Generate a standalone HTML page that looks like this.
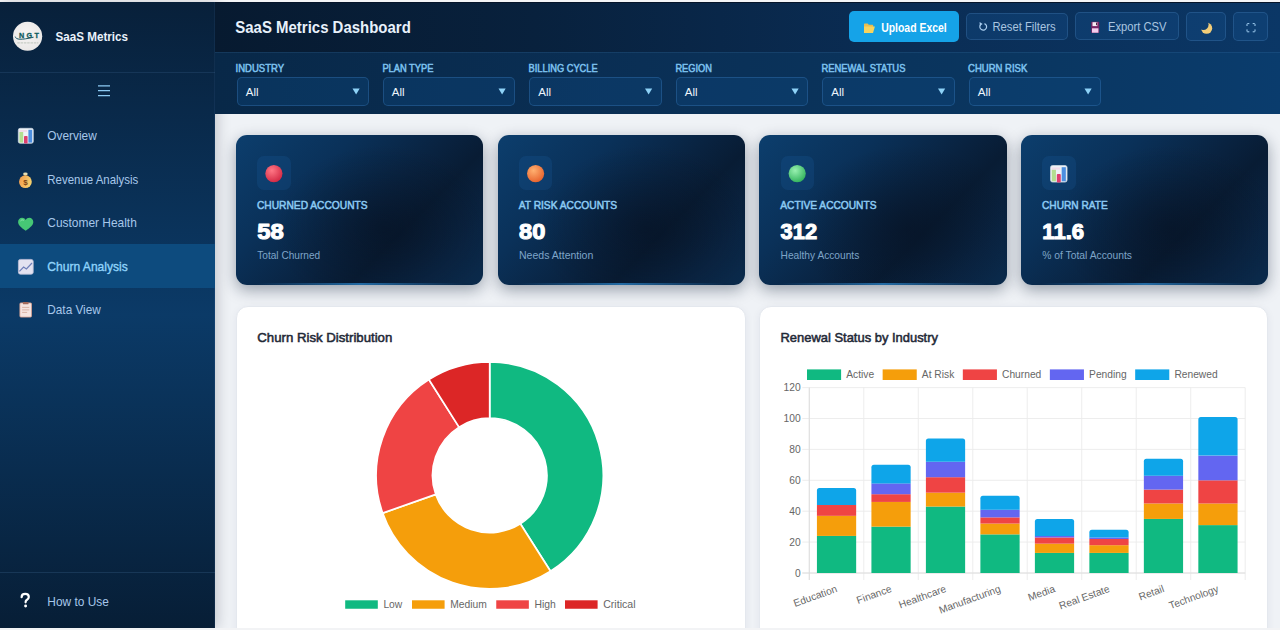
<!DOCTYPE html>
<html><head><meta charset="utf-8"><style>
*{margin:0;padding:0;box-sizing:border-box}
html,body{width:1280px;height:630px;overflow:hidden;background:#f4f5f7;font-family:"Liberation Sans", sans-serif}
.a{position:absolute}
#main{position:absolute;left:215px;top:113.5px;width:1065px;height:516.5px;background:#eff2f6}
#side{position:absolute;left:0;top:2px;width:215px;height:626px;box-shadow:3px 0 12px rgba(0,10,30,0.18);background:linear-gradient(180deg,#08203a 0%,#0b3a67 50%,#071e36 100%);border-right:1px solid rgba(120,170,230,0.08)}
#hdr{position:absolute;left:215px;top:2px;width:1065px;height:50px;background:linear-gradient(90deg,#071a30 0%,#08213d 30%,#0a2c53 62%,#0b3766 100%);border-top:1px solid #06152a}
#flt{position:absolute;left:215px;top:52px;width:1065px;height:61.5px;background:linear-gradient(90deg,#082848 0%,#0a2f55 40%,#0a3660 75%,#0a3c6d 100%);border-top:1px solid rgba(110,170,230,0.12)}
.sel{position:absolute;top:77px;width:132.5px;height:29px;border-radius:5px;background:rgba(14,70,125,0.38);border:1px solid rgba(70,140,210,0.30)}
.btn{position:absolute;border-radius:5px;background:rgba(20,80,140,0.35);border:1px solid rgba(110,170,230,0.2)}
.kpi{position:absolute;top:134.7px;width:247.4px;height:150px;border-radius:11px;background:radial-gradient(ellipse 45% 55% at 60% 62%,rgba(6,16,32,0.55) 0%,rgba(6,16,32,0.2) 60%,rgba(6,16,32,0) 100%),linear-gradient(135deg,#0c3e6d 0%,#0a3159 30%,#09223f 55%,#081c34 66%,#0a2544 85%,#0a2a4b 100%);box-shadow:0 5px 15px rgba(10,25,50,0.38);overflow:hidden}
.kpi:after{content:"";position:absolute;left:8%;right:8%;bottom:0;height:2px;background:linear-gradient(90deg,rgba(40,140,220,0),rgba(50,150,225,0.65),rgba(40,140,220,0))}
.kico{position:absolute;left:21.3px;top:21px;width:33.5px;height:34px;border-radius:7px;background:rgba(30,100,170,0.20)}
.card{position:absolute;top:305.7px;height:340px;background:#ffffff;border-radius:12px;border:1px solid #e4e8ee;box-shadow:0 2px 8px rgba(20,40,80,0.06)}
</style></head><body>
<div id="main"></div>
<div id="side"></div>
<div class="a" style="left:0;top:71.6px;width:215px;height:1px;background:rgba(120,175,230,0.12)"></div>
<div class="a" style="left:0;top:243.8px;width:215px;height:44.4px;background:#0d4b7e"></div>
<div class="a" style="left:0;top:572px;width:215px;height:1px;background:rgba(120,175,230,0.15)"></div>
<div id="hdr"></div>
<div id="flt"></div>
<div class="sel" style="left:236.5px"></div><div class="sel" style="left:382.5px"></div><div class="sel" style="left:529.0px"></div><div class="sel" style="left:675.5px"></div><div class="sel" style="left:822.0px"></div><div class="sel" style="left:968.5px"></div>
<div class="a" style="left:849px;top:10.9px;width:110px;height:31.5px;border-radius:5px;background:#15a3e8"></div>
<div class="btn" style="left:966.3px;top:12.8px;width:101.6px;height:27.5px"></div>
<div class="btn" style="left:1075.4px;top:12.4px;width:103.6px;height:28px"></div>
<div class="btn" style="left:1186px;top:12.2px;width:40.2px;height:28.6px"></div>
<div class="btn" style="left:1233.3px;top:12.2px;width:35.2px;height:28.6px"></div>
<div class="kpi" style="left:236.0px"><div class="kico"></div></div><div class="kpi" style="left:497.7px"><div class="kico"></div></div><div class="kpi" style="left:759.3px"><div class="kico"></div></div><div class="kpi" style="left:1021.0px"><div class="kico"></div></div>
<div class="card" style="left:236px;width:509.5px"></div>
<div class="card" style="left:759px;width:509.1px"></div>
<div class="a" style="left:0;top:628px;width:1280px;height:2px;background:#f2f3f5"></div>
<svg class="a" style="left:0;top:0" width="1280" height="630" viewBox="0 0 1280 630" font-family="Liberation Sans">
<g transform="translate(17.8,127.8) scale(1.0)">
<rect x="0.5" y="0.5" width="15" height="15" rx="1.8" fill="#eef3f7" stroke="#cdd8e2" stroke-width="0.7"/>
<rect x="1.6" y="4.2" width="3.8" height="10.6" fill="#b3df90"/>
<rect x="1.6" y="2.2" width="7.6" height="2" fill="#f1d6e6" opacity="0.8"/>
<rect x="6.2" y="8.2" width="3.6" height="7.6" rx="0.8" fill="#de3f6f"/>
<rect x="10.6" y="2" width="3.8" height="12.8" fill="#4d8fe0"/>
</g><g transform="translate(17.5,169.5)">
<defs><linearGradient id="mbg" x1="0" y1="0" x2="1" y2="0.3"><stop offset="0" stop-color="#f19a4e"/><stop offset="1" stop-color="#f6cf6c"/></linearGradient></defs>
<path d="M6.6 5.2 L9.2 5.2 L8.9 6.6 L6.9 6.6 Z" fill="#9a6a34"/>
<ellipse cx="7.9" cy="4.4" rx="2.3" ry="1.4" fill="#e9dfb2"/>
<circle cx="7.9" cy="12.2" r="6.4" fill="url(#mbg)"/>
<text x="7.9" y="15.4" font-size="8" font-weight="bold" fill="#7a4514" text-anchor="middle">$</text>
</g><g transform="translate(17.7,217.2)">
<path d="M8 13.6 C3.2 10.4 0.4 7.8 0.4 4.9 C0.4 2.5 2.2 0.6 4.4 0.6 C5.9 0.6 7.2 1.4 8 2.7 C8.8 1.4 10.1 0.6 11.6 0.6 C13.8 0.6 15.6 2.5 15.6 4.9 C15.6 7.8 12.8 10.4 8 13.6 Z" fill="#46c775"/>
<path d="M3 3.5 C3.8 2.5 5 2.4 5.8 2.9" fill="none" stroke="#9be6b5" stroke-width="0.9" stroke-linecap="round"/>
</g><g transform="translate(17.8,258.8)">
<rect x="0.6" y="0.6" width="14.8" height="14.8" rx="2" fill="#e3e2f0" stroke="#bdbfd8" stroke-width="0.8"/>
<path d="M1.6 12.6 L5.8 8.2 L8.6 10.2 L14.2 4.2" fill="none" stroke="#6f7fb8" stroke-width="1.2"/>
</g><g transform="translate(19.3,301.6)">
<rect x="0.6" y="1.3" width="11.6" height="14.2" rx="1" fill="#f5e4e0" stroke="#d9a190" stroke-width="0.8"/>
<rect x="3.6" y="0.3" width="5.6" height="2.4" rx="0.6" fill="#a46b5c"/>
<path d="M2.8 5.8h7.2M2.8 8.3h7.2M2.8 10.8h5" stroke="#cf9f8f" stroke-width="0.7"/>
</g><g transform="translate(20,593)"><path d="M1.6 4.2 C1.6 2 3.2 0.9 5.2 0.9 C7.3 0.9 8.8 2.1 8.8 4 C8.8 5.8 7.4 6.5 6.5 7.2 C5.8 7.8 5.6 8.3 5.6 9.3" fill="none" stroke="#ffffff" stroke-width="2.2" stroke-linecap="round"/><circle cx="5.6" cy="13" r="1.45" fill="#ffffff"/></g><path d="M98 85.9h12M98 90.7h12M98 95.5h12" stroke="#8ccaf3" stroke-width="1.25"/><defs><radialGradient id="lg" cx="45%" cy="40%" r="65%"><stop offset="0" stop-color="#f7f4f3"/><stop offset="1" stop-color="#e9e7e6"/></radialGradient></defs>
<circle cx="27.6" cy="36.25" r="14.6" fill="url(#lg)"/>
<text x="19.0" y="37.7" font-size="7.2" font-weight="bold" fill="#0f5c60" stroke="#0f5c60" stroke-width="0.3" textLength="19.8" lengthAdjust="spacing">NGT</text>
<path d="M15.2 36.6 C16 39.8 21 40.2 33.6 37.2" fill="none" stroke="#1b5866" stroke-width="1.0"/>
<path d="M17.3 42.9h21" stroke="#a9b3a8" stroke-width="0.7" stroke-dasharray="2.5 0.8"/><path d="M864 24.3 Q864 23.6 864.7 23.6 L867.6 23.6 L868.8 24.7 L872.5 24.7 Q873.2 24.7 873.2 25.4 L873.2 27.5 L864 27.5 Z" fill="#eabd4e"/><path d="M864 33 L864 26.6 L874.9 26.6 L873 33 Z" fill="#f7d45e"/><path d="M984.46 23.6 A3.4 3.4 0 1 1 980.6 24.6" fill="none" stroke="#a9cdef" stroke-width="1.2"/><path d="M982.6 23.9 L979.6 22.0 L979.8 25.9 Z" fill="#a9cdef"/><rect x="1091.2" y="21.8" width="8" height="11.3" rx="0.8" fill="#7a2466"/><rect x="1092.5" y="22.2" width="4.8" height="3.9" fill="#f4eaf4"/><rect x="1096" y="22.6" width="0.9" height="2.6" fill="#3a1030"/><rect x="1092" y="28.3" width="6.4" height="4.4" fill="#f3cdee"/><defs><mask id="mm"><rect x="1195" y="15" width="25" height="25" fill="#fff"/><circle cx="1203.2" cy="24.6" r="5.4" fill="#000"/></mask></defs><circle cx="1206.6" cy="28.2" r="5.6" fill="#f2cd78" mask="url(#mm)"/><path d="M1247 26V24.2Q1247 23.6 1247.6 23.6H1249.3M1252.7 23.6H1254.4Q1255 23.6 1255 24.2V26M1255 29.4V31.2Q1255 31.8 1254.4 31.8H1252.7M1249.3 31.8H1247.6Q1247 31.8 1247 31.2V29.4" fill="none" stroke="#a3d0f3" stroke-width="1"/><path d="M352.50 88.6H359.70L356.10 94.4Z" fill="#8ed2f7"/><path d="M498.50 88.6H505.70L502.10 94.4Z" fill="#8ed2f7"/><path d="M645.00 88.6H652.20L648.60 94.4Z" fill="#8ed2f7"/><path d="M791.50 88.6H798.70L795.10 94.4Z" fill="#8ed2f7"/><path d="M938.00 88.6H945.20L941.60 94.4Z" fill="#8ed2f7"/><path d="M1084.50 88.6H1091.70L1088.10 94.4Z" fill="#8ed2f7"/><defs><radialGradient id="c1" cx="38%" cy="32%" r="70%"><stop offset="0" stop-color="#ff7785"/><stop offset="1" stop-color="#d42a45"/></radialGradient></defs>
<circle cx="273.9" cy="173.6" r="8.6" fill="url(#c1)"/><defs><radialGradient id="c2" cx="38%" cy="32%" r="70%"><stop offset="0" stop-color="#ffb070"/><stop offset="1" stop-color="#e8642e"/></radialGradient></defs>
<circle cx="535.6" cy="173.6" r="8.6" fill="url(#c2)"/><defs><radialGradient id="c3" cx="38%" cy="32%" r="70%"><stop offset="0" stop-color="#98f0b0"/><stop offset="1" stop-color="#34b45e"/></radialGradient></defs>
<circle cx="797.1999999999999" cy="173.6" r="8.6" fill="url(#c3)"/><g transform="translate(1050.0,165.0) scale(1.1)">
<rect x="0.5" y="0.5" width="15" height="15" rx="1.8" fill="#eef3f7" stroke="#cdd8e2" stroke-width="0.7"/>
<rect x="1.6" y="4.2" width="3.8" height="10.6" fill="#b3df90"/>
<rect x="1.6" y="2.2" width="7.6" height="2" fill="#f1d6e6" opacity="0.8"/>
<rect x="6.2" y="8.2" width="3.6" height="7.6" rx="0.8" fill="#de3f6f"/>
<rect x="10.6" y="2" width="3.8" height="12.8" fill="#4d8fe0"/>
</g>
<path d="M489.70 361.90 A113.5 113.5 0 0 1 550.52 571.23 L520.35 523.70 A57.2 57.2 0 0 0 489.70 418.20 Z" fill="#10b981" stroke="#fff" stroke-width="1.7" stroke-linejoin="round"/>
<path d="M550.52 571.23 A113.5 113.5 0 0 1 382.64 513.10 L435.75 494.40 A57.2 57.2 0 0 0 520.35 523.70 Z" fill="#f59e0b" stroke="#fff" stroke-width="1.7" stroke-linejoin="round"/>
<path d="M382.64 513.10 A113.5 113.5 0 0 1 428.88 379.57 L459.05 427.10 A57.2 57.2 0 0 0 435.75 494.40 Z" fill="#ef4444" stroke="#fff" stroke-width="1.7" stroke-linejoin="round"/>
<path d="M428.88 379.57 A113.5 113.5 0 0 1 489.70 361.90 L489.70 418.20 A57.2 57.2 0 0 0 459.05 427.10 Z" fill="#dc2626" stroke="#fff" stroke-width="1.7" stroke-linejoin="round"/>
<rect x="345.2" y="600.3" width="32.6" height="8.45" fill="#10b981"/>
<text x="383.4" y="608.1" font-size="10.1" fill="#666666" textLength="18.9" lengthAdjust="spacingAndGlyphs">Low</text>
<rect x="412.0" y="600.3" width="32.6" height="8.45" fill="#f59e0b"/>
<text x="450.2" y="608.1" font-size="10.1" fill="#666666" textLength="36.6" lengthAdjust="spacingAndGlyphs">Medium</text>
<rect x="496.25" y="600.3" width="32.6" height="8.45" fill="#ef4444"/>
<text x="534.5" y="608.1" font-size="10.1" fill="#666666" textLength="21.3" lengthAdjust="spacingAndGlyphs">High</text>
<rect x="565.0" y="600.3" width="32.6" height="8.45" fill="#dc2626"/>
<text x="603.2" y="608.1" font-size="10.1" fill="#666666" textLength="32.3" lengthAdjust="spacingAndGlyphs">Critical</text>
<line x1="802.3" y1="573.00" x2="1245.2" y2="573.00" stroke="#ebebeb" stroke-width="0.9"/>
<text x="800.70" y="576.55" font-size="10.24" fill="#666666" text-anchor="end">0</text>
<line x1="802.3" y1="542.10" x2="1245.2" y2="542.10" stroke="#ebebeb" stroke-width="0.9"/>
<text x="800.70" y="545.65" font-size="10.24" fill="#666666" text-anchor="end">20</text>
<line x1="802.3" y1="511.20" x2="1245.2" y2="511.20" stroke="#ebebeb" stroke-width="0.9"/>
<text x="800.70" y="514.75" font-size="10.24" fill="#666666" text-anchor="end">40</text>
<line x1="802.3" y1="480.30" x2="1245.2" y2="480.30" stroke="#ebebeb" stroke-width="0.9"/>
<text x="800.70" y="483.85" font-size="10.24" fill="#666666" text-anchor="end">60</text>
<line x1="802.3" y1="449.40" x2="1245.2" y2="449.40" stroke="#ebebeb" stroke-width="0.9"/>
<text x="800.70" y="452.95" font-size="10.24" fill="#666666" text-anchor="end">80</text>
<line x1="802.3" y1="418.50" x2="1245.2" y2="418.50" stroke="#ebebeb" stroke-width="0.9"/>
<text x="800.70" y="422.05" font-size="10.24" fill="#666666" text-anchor="end">100</text>
<line x1="802.3" y1="387.60" x2="1245.2" y2="387.60" stroke="#ebebeb" stroke-width="0.9"/>
<text x="800.70" y="391.15" font-size="10.24" fill="#666666" text-anchor="end">120</text>
<line x1="809.30" y1="387.6" x2="809.30" y2="580.0" stroke="#ebebeb" stroke-width="0.9"/>
<line x1="863.79" y1="387.6" x2="863.79" y2="580.0" stroke="#ebebeb" stroke-width="0.9"/>
<line x1="918.27" y1="387.6" x2="918.27" y2="580.0" stroke="#ebebeb" stroke-width="0.9"/>
<line x1="972.76" y1="387.6" x2="972.76" y2="580.0" stroke="#ebebeb" stroke-width="0.9"/>
<line x1="1027.25" y1="387.6" x2="1027.25" y2="580.0" stroke="#ebebeb" stroke-width="0.9"/>
<line x1="1081.74" y1="387.6" x2="1081.74" y2="580.0" stroke="#ebebeb" stroke-width="0.9"/>
<line x1="1136.22" y1="387.6" x2="1136.22" y2="580.0" stroke="#ebebeb" stroke-width="0.9"/>
<line x1="1190.71" y1="387.6" x2="1190.71" y2="580.0" stroke="#ebebeb" stroke-width="0.9"/>
<line x1="1245.20" y1="387.6" x2="1245.20" y2="580.0" stroke="#ebebeb" stroke-width="0.9"/>
<line x1="809.30" y1="387.6" x2="809.30" y2="580.0" stroke="#dcdcdc" stroke-width="0.9"/>
<line x1="802.30" y1="573.0" x2="1245.2" y2="573.0" stroke="#dcdcdc" stroke-width="0.9"/>
<rect x="816.93" y="535.92" width="39.23" height="37.08" fill="#10b981"/>
<rect x="816.93" y="515.84" width="39.23" height="20.08" fill="#f59e0b"/>
<rect x="816.93" y="505.02" width="39.23" height="10.82" fill="#ef4444"/>
<path d="M816.93 505.02 L816.93 490.53 Q816.93 488.03 819.43 488.03 L853.66 488.03 Q856.16 488.03 856.16 490.53 L856.16 505.02 Z" fill="#0ea5e9"/>
<text transform="translate(834.54,582.40) rotate(-20)" y="9.7" font-size="10.24" fill="#666666" text-anchor="end">Education</text>
<rect x="871.42" y="526.65" width="39.23" height="46.35" fill="#10b981"/>
<rect x="871.42" y="501.93" width="39.23" height="24.72" fill="#f59e0b"/>
<rect x="871.42" y="494.21" width="39.23" height="7.72" fill="#ef4444"/>
<rect x="871.42" y="483.39" width="39.23" height="10.82" fill="#6366f1"/>
<path d="M871.42 483.39 L871.42 467.35 Q871.42 464.85 873.92 464.85 L908.15 464.85 Q910.65 464.85 910.65 467.35 L910.65 483.39 Z" fill="#0ea5e9"/>
<text transform="translate(889.03,582.40) rotate(-20)" y="9.7" font-size="10.24" fill="#666666" text-anchor="end">Finance</text>
<rect x="925.90" y="506.56" width="39.23" height="66.44" fill="#10b981"/>
<rect x="925.90" y="492.66" width="39.23" height="13.90" fill="#f59e0b"/>
<rect x="925.90" y="477.21" width="39.23" height="15.45" fill="#ef4444"/>
<rect x="925.90" y="461.76" width="39.23" height="15.45" fill="#6366f1"/>
<path d="M925.90 461.76 L925.90 441.09 Q925.90 438.59 928.40 438.59 L962.63 438.59 Q965.13 438.59 965.13 441.09 L965.13 461.76 Z" fill="#0ea5e9"/>
<text transform="translate(943.52,582.40) rotate(-20)" y="9.7" font-size="10.24" fill="#666666" text-anchor="end">Healthcare</text>
<rect x="980.39" y="534.38" width="39.23" height="38.62" fill="#10b981"/>
<rect x="980.39" y="523.56" width="39.23" height="10.81" fill="#f59e0b"/>
<rect x="980.39" y="517.38" width="39.23" height="6.18" fill="#ef4444"/>
<rect x="980.39" y="509.66" width="39.23" height="7.72" fill="#6366f1"/>
<path d="M980.39 509.66 L980.39 498.25 Q980.39 495.75 982.89 495.75 L1017.12 495.75 Q1019.62 495.75 1019.62 498.25 L1019.62 509.66 Z" fill="#0ea5e9"/>
<text transform="translate(998.01,582.40) rotate(-20)" y="9.7" font-size="10.24" fill="#666666" text-anchor="end">Manufacturing</text>
<rect x="1034.88" y="552.91" width="39.23" height="20.09" fill="#10b981"/>
<rect x="1034.88" y="543.64" width="39.23" height="9.27" fill="#f59e0b"/>
<rect x="1034.88" y="537.47" width="39.23" height="6.18" fill="#ef4444"/>
<rect x="1034.88" y="535.92" width="39.23" height="1.55" fill="#6366f1"/>
<path d="M1034.88 535.92 L1034.88 521.42 Q1034.88 518.92 1037.38 518.92 L1071.61 518.92 Q1074.11 518.92 1074.11 521.42 L1074.11 535.92 Z" fill="#0ea5e9"/>
<text transform="translate(1052.49,582.40) rotate(-20)" y="9.7" font-size="10.24" fill="#666666" text-anchor="end">Media</text>
<rect x="1089.37" y="552.91" width="39.23" height="20.09" fill="#10b981"/>
<rect x="1089.37" y="545.19" width="39.23" height="7.72" fill="#f59e0b"/>
<rect x="1089.37" y="539.01" width="39.23" height="6.18" fill="#ef4444"/>
<rect x="1089.37" y="537.47" width="39.23" height="1.54" fill="#6366f1"/>
<path d="M1089.37 537.47 L1089.37 532.24 Q1089.37 529.74 1091.87 529.74 L1126.10 529.74 Q1128.60 529.74 1128.60 532.24 L1128.60 537.47 Z" fill="#0ea5e9"/>
<text transform="translate(1106.98,582.40) rotate(-20)" y="9.7" font-size="10.24" fill="#666666" text-anchor="end">Real Estate</text>
<rect x="1143.85" y="518.92" width="39.23" height="54.08" fill="#10b981"/>
<rect x="1143.85" y="503.48" width="39.23" height="15.45" fill="#f59e0b"/>
<rect x="1143.85" y="489.57" width="39.23" height="13.90" fill="#ef4444"/>
<rect x="1143.85" y="475.67" width="39.23" height="13.91" fill="#6366f1"/>
<path d="M1143.85 475.67 L1143.85 461.17 Q1143.85 458.67 1146.35 458.67 L1180.58 458.67 Q1183.08 458.67 1183.08 461.17 L1183.08 475.67 Z" fill="#0ea5e9"/>
<text transform="translate(1161.47,582.40) rotate(-20)" y="9.7" font-size="10.24" fill="#666666" text-anchor="end">Retail</text>
<rect x="1198.34" y="525.11" width="39.23" height="47.89" fill="#10b981"/>
<rect x="1198.34" y="503.48" width="39.23" height="21.63" fill="#f59e0b"/>
<rect x="1198.34" y="480.30" width="39.23" height="23.18" fill="#ef4444"/>
<rect x="1198.34" y="455.58" width="39.23" height="24.72" fill="#6366f1"/>
<path d="M1198.34 455.58 L1198.34 419.46 Q1198.34 416.96 1200.84 416.96 L1235.07 416.96 Q1237.57 416.96 1237.57 419.46 L1237.57 455.58 Z" fill="#0ea5e9"/>
<text transform="translate(1215.96,582.40) rotate(-20)" y="9.7" font-size="10.24" fill="#666666" text-anchor="end">Technology</text>
<rect x="807.00" y="369.4" width="34.1" height="10.6" fill="#10b981"/>
<text x="846.22" y="378.25" font-size="10.24" fill="#666666">Active</text>
<rect x="882.64" y="369.4" width="34.1" height="10.6" fill="#f59e0b"/>
<text x="921.86" y="378.25" font-size="10.24" fill="#666666">At Risk</text>
<rect x="962.82" y="369.4" width="34.1" height="10.6" fill="#ef4444"/>
<text x="1002.04" y="378.25" font-size="10.24" fill="#666666">Churned</text>
<rect x="1049.85" y="369.4" width="34.1" height="10.6" fill="#6366f1"/>
<text x="1089.07" y="378.25" font-size="10.24" fill="#666666">Pending</text>
<rect x="1135.18" y="369.4" width="34.1" height="10.6" fill="#0ea5e9"/>
<text x="1174.40" y="378.25" font-size="10.24" fill="#666666">Renewed</text>
<text x="55.50" y="40.90" font-size="13.2" fill="#eaf2fb" font-weight="bold" textLength="72.50" lengthAdjust="spacingAndGlyphs" >SaaS Metrics</text><text x="47.30" y="140.00" font-size="12.9" fill="#a7c7ea" textLength="49.50" lengthAdjust="spacingAndGlyphs" >Overview</text><text x="47.30" y="183.90" font-size="12.9" fill="#a7c7ea" textLength="91.00" lengthAdjust="spacingAndGlyphs" >Revenue Analysis</text><text x="47.30" y="227.30" font-size="12.9" fill="#a7c7ea" textLength="89.50" lengthAdjust="spacingAndGlyphs" >Customer Health</text><text x="47.30" y="271.10" font-size="12.9" fill="#8fd4fb" textLength="80.50" lengthAdjust="spacingAndGlyphs" stroke="#8fd4fb" stroke-width="0.35">Churn Analysis</text><text x="47.30" y="314.10" font-size="12.9" fill="#a7c7ea" textLength="53.50" lengthAdjust="spacingAndGlyphs" >Data View</text><text x="47.30" y="605.60" font-size="12.9" fill="#a7c7ea" textLength="61.50" lengthAdjust="spacingAndGlyphs" >How to Use</text><text x="235.30" y="33.00" font-size="16.3" fill="#e8f1fb" font-weight="bold" textLength="175.50" lengthAdjust="spacingAndGlyphs" >SaaS Metrics Dashboard</text><text x="881.20" y="31.60" font-size="12.5" fill="#ffffff" font-weight="bold" textLength="65.50" lengthAdjust="spacingAndGlyphs" >Upload Excel</text><text x="992.50" y="31.00" font-size="12.2" fill="#a9c5e0" textLength="63.00" lengthAdjust="spacingAndGlyphs" >Reset Filters</text><text x="1108.00" y="30.90" font-size="12.2" fill="#a9c5e0" textLength="58.50" lengthAdjust="spacingAndGlyphs" >Export CSV</text><text x="235.50" y="71.60" font-size="10.2" fill="#7dc2ef" textLength="48.50" lengthAdjust="spacingAndGlyphs" stroke="#7dc2ef" stroke-width="0.5">INDUSTRY</text><text x="382.40" y="71.60" font-size="10.2" fill="#7dc2ef" textLength="51.00" lengthAdjust="spacingAndGlyphs" stroke="#7dc2ef" stroke-width="0.5">PLAN TYPE</text><text x="528.60" y="71.60" font-size="10.2" fill="#7dc2ef" textLength="69.00" lengthAdjust="spacingAndGlyphs" stroke="#7dc2ef" stroke-width="0.5">BILLING CYCLE</text><text x="675.40" y="71.60" font-size="10.2" fill="#7dc2ef" textLength="36.50" lengthAdjust="spacingAndGlyphs" stroke="#7dc2ef" stroke-width="0.5">REGION</text><text x="821.60" y="71.60" font-size="10.2" fill="#7dc2ef" textLength="83.80" lengthAdjust="spacingAndGlyphs" stroke="#7dc2ef" stroke-width="0.5">RENEWAL STATUS</text><text x="968.10" y="71.60" font-size="10.2" fill="#7dc2ef" textLength="59.20" lengthAdjust="spacingAndGlyphs" stroke="#7dc2ef" stroke-width="0.5">CHURN RISK</text><text x="245.80" y="96.00" font-size="11.6" fill="#eef5fc" textLength="12.80" lengthAdjust="spacingAndGlyphs" >All</text><text x="391.80" y="96.00" font-size="11.6" fill="#eef5fc" textLength="12.80" lengthAdjust="spacingAndGlyphs" >All</text><text x="538.30" y="96.00" font-size="11.6" fill="#eef5fc" textLength="12.80" lengthAdjust="spacingAndGlyphs" >All</text><text x="684.80" y="96.00" font-size="11.6" fill="#eef5fc" textLength="12.80" lengthAdjust="spacingAndGlyphs" >All</text><text x="831.30" y="96.00" font-size="11.6" fill="#eef5fc" textLength="12.80" lengthAdjust="spacingAndGlyphs" >All</text><text x="977.80" y="96.00" font-size="11.6" fill="#eef5fc" textLength="12.80" lengthAdjust="spacingAndGlyphs" >All</text><text x="257.00" y="209.20" font-size="10.9" fill="#8ccaf3" textLength="110.60" lengthAdjust="spacingAndGlyphs" stroke="#8ccaf3" stroke-width="0.5">CHURNED ACCOUNTS</text><text x="257.30" y="239.40" font-size="22.2" fill="#ffffff" font-weight="bold" textLength="26.50" lengthAdjust="spacingAndGlyphs" stroke="#ffffff" stroke-width="1.1" stroke-linejoin="round">58</text><text x="257.30" y="259.40" font-size="10.5" fill="#7fa5c8" textLength="62.80" lengthAdjust="spacingAndGlyphs" >Total Churned</text><text x="518.70" y="209.20" font-size="10.9" fill="#8ccaf3" textLength="98.40" lengthAdjust="spacingAndGlyphs" stroke="#8ccaf3" stroke-width="0.5">AT RISK ACCOUNTS</text><text x="519.00" y="239.40" font-size="22.2" fill="#ffffff" font-weight="bold" textLength="26.30" lengthAdjust="spacingAndGlyphs" stroke="#ffffff" stroke-width="1.1" stroke-linejoin="round">80</text><text x="519.00" y="259.40" font-size="10.5" fill="#7fa5c8" textLength="74.30" lengthAdjust="spacingAndGlyphs" >Needs Attention</text><text x="780.30" y="209.20" font-size="10.9" fill="#8ccaf3" textLength="96.20" lengthAdjust="spacingAndGlyphs" stroke="#8ccaf3" stroke-width="0.5">ACTIVE ACCOUNTS</text><text x="780.60" y="239.40" font-size="22.2" fill="#ffffff" font-weight="bold" textLength="36.50" lengthAdjust="spacingAndGlyphs" stroke="#ffffff" stroke-width="1.1" stroke-linejoin="round">312</text><text x="780.60" y="259.40" font-size="10.5" fill="#7fa5c8" textLength="78.70" lengthAdjust="spacingAndGlyphs" >Healthy Accounts</text><text x="1042.00" y="209.20" font-size="10.9" fill="#8ccaf3" textLength="65.80" lengthAdjust="spacingAndGlyphs" stroke="#8ccaf3" stroke-width="0.5">CHURN RATE</text><text x="1042.30" y="239.40" font-size="22.2" fill="#ffffff" font-weight="bold" textLength="41.90" lengthAdjust="spacingAndGlyphs" stroke="#ffffff" stroke-width="1.1" stroke-linejoin="round">11.6</text><text x="1042.30" y="259.40" font-size="10.5" fill="#7fa5c8" textLength="89.70" lengthAdjust="spacingAndGlyphs" >% of Total Accounts</text><text x="257.30" y="342.00" font-size="13.7" fill="#1f2937" textLength="135.00" lengthAdjust="spacingAndGlyphs" stroke="#1f2937" stroke-width="0.55">Churn Risk Distribution</text><text x="780.50" y="341.70" font-size="13.7" fill="#1f2937" textLength="157.50" lengthAdjust="spacingAndGlyphs" stroke="#1f2937" stroke-width="0.55">Renewal Status by Industry</text>
</svg>
</body></html>
